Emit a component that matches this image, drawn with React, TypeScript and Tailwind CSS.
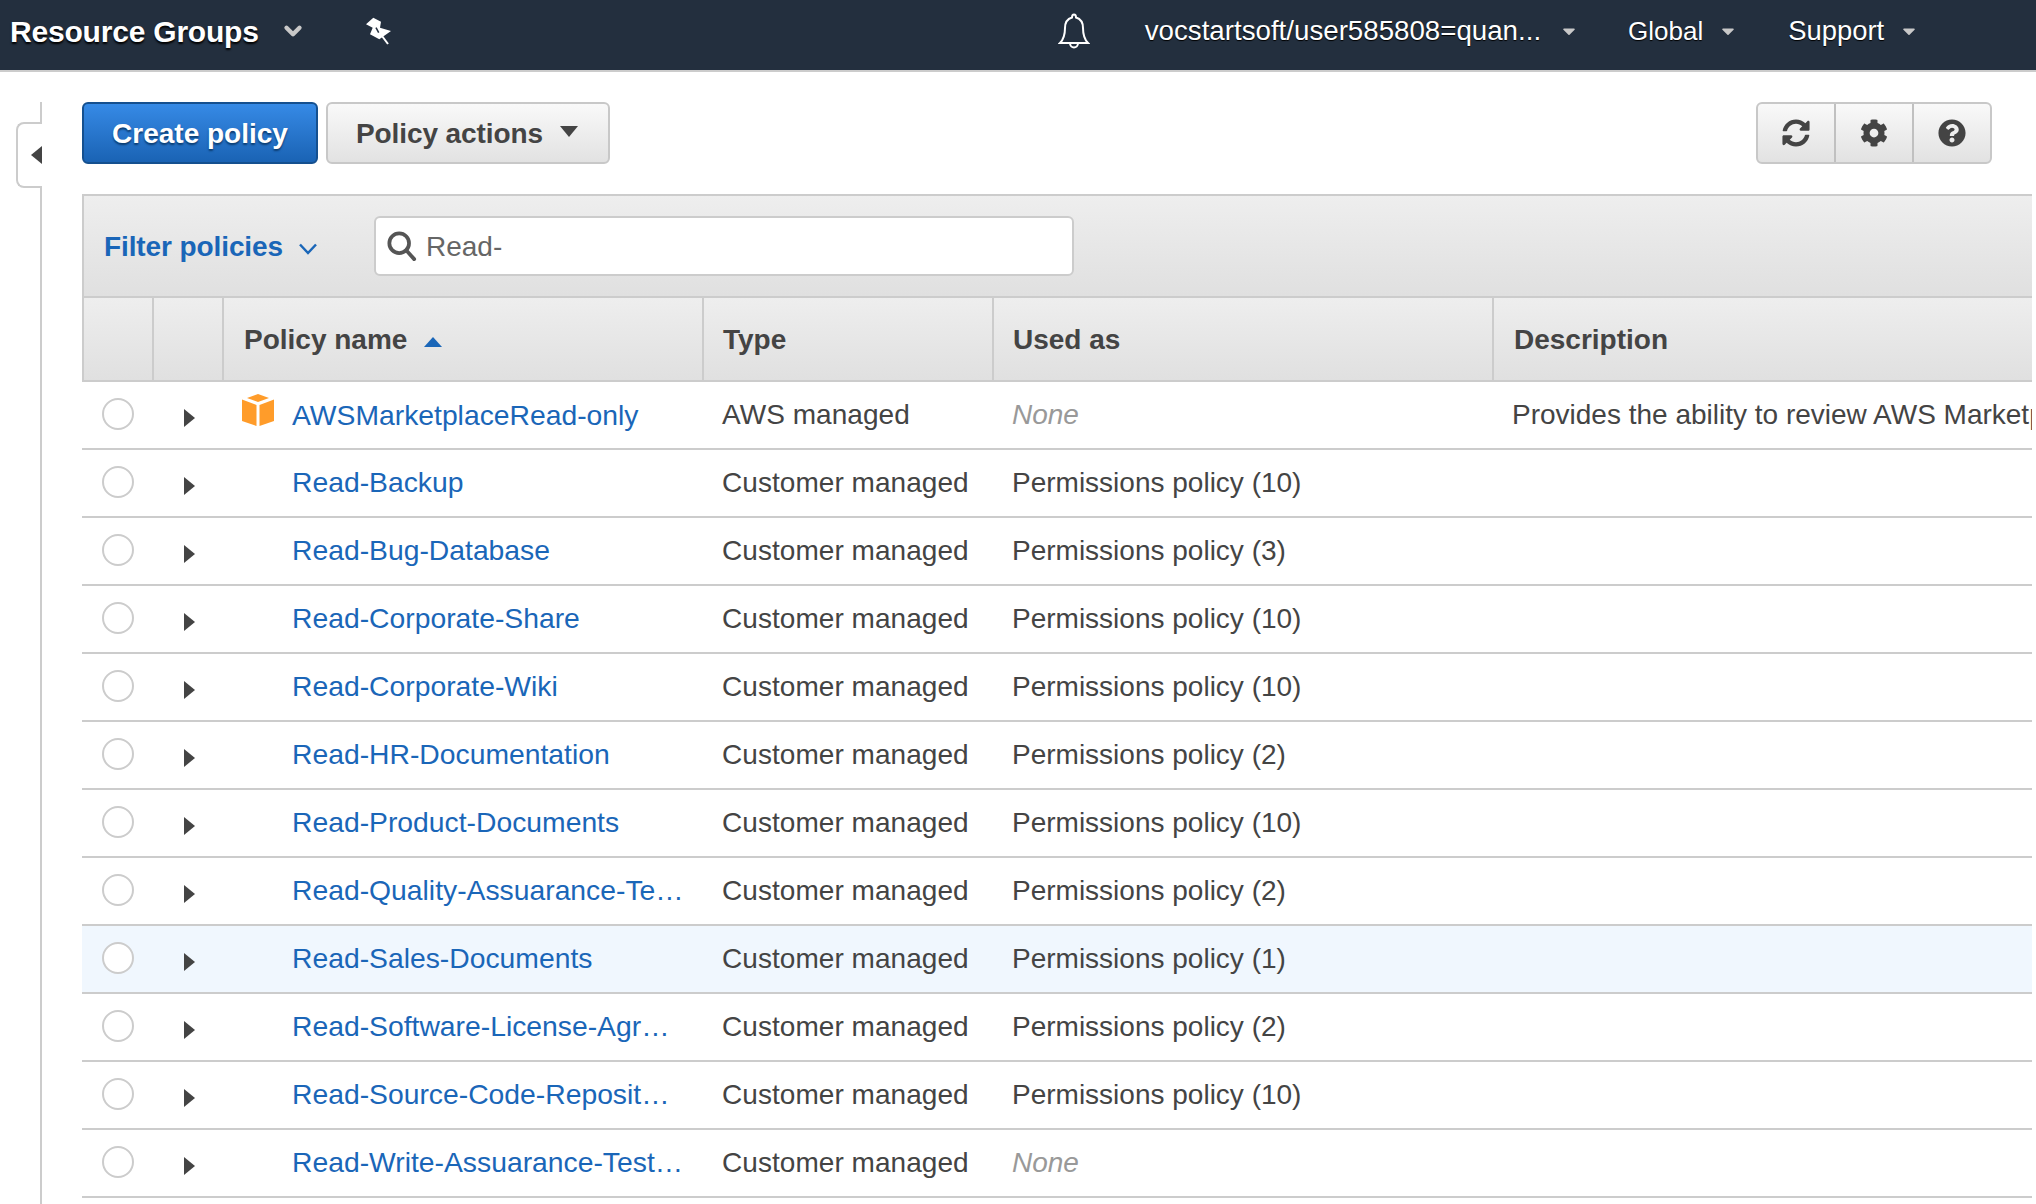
import { FaSyncAlt, FaCog, FaQuestionCircle, FaCaretDown } from "react-icons/fa";
import { FiChevronDown } from "react-icons/fi";

const rows = [
  { name: "AWSMarketplaceRead-only", type: "AWS managed", used: "None", desc: "Provides the ability to review AWS Marketplace subscriptions", aws: true },
  { name: "Read-Backup", type: "Customer managed", used: "Permissions policy (10)" },
  { name: "Read-Bug-Database", type: "Customer managed", used: "Permissions policy (3)" },
  { name: "Read-Corporate-Share", type: "Customer managed", used: "Permissions policy (10)" },
  { name: "Read-Corporate-Wiki", type: "Customer managed", used: "Permissions policy (10)" },
  { name: "Read-HR-Documentation", type: "Customer managed", used: "Permissions policy (2)" },
  { name: "Read-Product-Documents", type: "Customer managed", used: "Permissions policy (10)" },
  { name: "Read-Quality-Assuarance-Team-Documents", type: "Customer managed", used: "Permissions policy (2)" },
  { name: "Read-Sales-Documents", type: "Customer managed", used: "Permissions policy (1)", hover: true },
  { name: "Read-Software-License-Agreements", type: "Customer managed", used: "Permissions policy (2)" },
  { name: "Read-Source-Code-Repositories", type: "Customer managed", used: "Permissions policy (10)" },
  { name: "Read-Write-Assuarance-Test-Documents", type: "Customer managed", used: "None" },
];

function Cube() {
  return (
    <svg width="32" height="32" viewBox="0 0 32 32" className="shrink-0">
      <path d="M16 0 L27 4 L16 8 L5 4 Z" fill="#ff9c2a" />
      <path d="M0 5.5 L14.5 11 L14.5 32 L0 27 Z" fill="#ff9c2a" />
      <path d="M32 5.5 L17.5 11 L17.5 32 L32 27 Z" fill="#ff9c2a" />
    </svg>
  );
}

function HeaderCell({ label, className, sorted }: { label: string; className: string; sorted?: boolean }) {
  return (
    <div className={`flex items-center border-r-2 border-[#cccccc] pt-[2px] ${className}`}>
      <span className="text-[28px] font-bold text-[#444444]">{label}</span>
      {sorted && (
        <svg width="18" height="10" viewBox="0 0 18 10" className="mt-[4px] ml-[17px]">
          <path d="M9 0 L18 10 L0 10 Z" fill="#1a66b8" />
        </svg>
      )}
    </div>
  );
}

export default function App() {
  return (
    <div className="h-[1204px] overflow-hidden bg-white font-['Liberation_Sans',Arial,sans-serif]">
      <nav className="flex h-[72px] items-center border-b-2 border-[#cccccc] bg-[#232f3e] pb-[8px] pl-[10px]">
        <span className="text-[30px] font-bold tracking-[-0.2px] text-white [text-shadow:0_2px_2px_#000]">Resource Groups</span>
        <FiChevronDown className="ml-[21px] text-[26px] text-[#c8c8c8]" strokeWidth={4} />
        <svg width="25" height="28" viewBox="0 0 25 28" className="ml-[60px]">
          <path d="M7.3 0.7 L15 4.7 L14 10.7 L25 14 L13.3 22.3 L4 17.3 L6.7 10.7 L0 7.3 Z" fill="white" />
          <path d="M16 19 L22 27" stroke="white" strokeWidth="2" />
          <path d="M10 10.7 L12.7 15.7" stroke="#232f3e" strokeWidth="1.5" />
        </svg>
        <svg width="32" height="36" viewBox="0 0 32 36" className="ml-[667px]" fill="none" stroke="white" strokeWidth="2">
          <path d="M16 1.5 C17.5 1.5 18 3 18 4.5 C23 6 25 10 25 15 C25 22 26 26 30 30 L2 30 C6 26 7 22 7 15 C7 10 9 6 14 4.5 C14 3 14.5 1.5 16 1.5 Z" />
          <path d="M12 30 C12 36 20 36 20 30" />
        </svg>
        <span className="ml-[55px] text-[27.7px] text-white [text-shadow:0_1px_1px_#000]">vocstartsoft/user585808=quan...</span>
        <FaCaretDown className="ml-[18px] text-[20px] text-[#c8c8c8]" />
        <span className="ml-[49px] text-[26px] text-white [text-shadow:0_1px_1px_#000]">Global</span>
        <FaCaretDown className="ml-[15px] text-[20px] text-[#c8c8c8]" />
        <span className="ml-[50px] text-[27.4px] text-white [text-shadow:0_1px_1px_#000]">Support</span>
        <FaCaretDown className="ml-[15px] text-[20px] text-[#c8c8c8]" />
      </nav>

      <div className="flex">
        <div className="w-[82px] shrink-0 pt-[30px]">
          <div className="h-[1102px] w-[42px] border-r-2 border-[#cccccc]">
            <div className="relative top-[20px] flex h-[66px] w-[26px] translate-x-[16px] items-center justify-end rounded-l-[8px] border-2 border-r-0 border-[#cccccc] bg-white">
              <svg width="11" height="18" viewBox="0 0 11 18">
                <path d="M11 0 L11 18 L0 9 Z" fill="#444444" />
              </svg>
            </div>
          </div>
        </div>

        <main className="w-[1950px] shrink-0 pt-[30px]">
          <div className="mr-[40px] flex h-[62px] items-stretch">
            <button className="flex w-[236px] items-center justify-center rounded-[6px] border-2 border-[#15508f] bg-gradient-to-b from-[#368ae6] to-[#1a63b4] pt-[2px] text-[28px] font-bold text-white [text-shadow:0_2px_2px_#0b3c70]">
              Create policy
            </button>
            <button className="ml-[8px] flex w-[284px] items-center rounded-[6px] border-2 border-[#c8c8c8] bg-gradient-to-b from-[#f9f9f9] to-[#e2e2e2] pl-[28px] text-[28px] font-bold text-[#444444]">
              <span className="pt-[2px] tracking-[-0.1px]">Policy actions</span>
              <svg width="18" height="11" viewBox="0 0 18 11" className="mb-[4px] ml-[17px]">
                <path d="M0 0 L18 0 L9 11 Z" fill="#444444" />
              </svg>
            </button>
            <div className="ml-auto flex w-[236px] rounded-[6px] border-2 border-[#c8c8c8] bg-gradient-to-b from-[#f9f9f9] to-[#e2e2e2] text-[28px] text-[#444444]">
              <div className="flex flex-1 items-center justify-center border-r-2 border-[#c0c0c0]"><FaSyncAlt /></div>
              <div className="flex flex-1 items-center justify-center border-r-2 border-[#c0c0c0]"><FaCog /></div>
              <div className="flex flex-1 items-center justify-center"><FaQuestionCircle /></div>
            </div>
          </div>

          <div className="mt-[30px] w-[1950px]">
            <div className="flex h-[104px] items-center border-y-2 border-l-2 border-[#cccccc] bg-gradient-to-b from-[#eeeeee] to-[#e0e0e0] pl-[20px]">
              <span className="pt-[2px] text-[28px] font-bold tracking-[-0.1px] text-[#1a66b8]">Filter policies</span>
              <svg width="18" height="12" viewBox="0 0 18 12" className="mt-[6px] ml-[16px]" fill="none" stroke="#1a66b8" strokeWidth="2.5">
                <path d="M1 1.5 L9 10 L17 1.5" />
              </svg>
              <div className="ml-[57px] flex h-[60px] w-[700px] items-center rounded-[6px] border-2 border-[#cccccc] bg-white pl-[11px] text-[28px] text-[#666666]">
                <svg width="30" height="30" viewBox="0 0 32 32" fill="none" stroke="#555555" strokeWidth="4">
                  <circle cx="13" cy="13" r="10.5" />
                  <path d="M20.5 20.5 L29 30" strokeLinecap="round" />
                </svg>
                <span className="ml-[9px] pt-[2px]">Read-</span>
              </div>
            </div>

            <div className="flex h-[84px] border-b-2 border-l-2 border-[#cccccc] bg-gradient-to-b from-[#eeeeee] to-[#e0e0e0]">
              <div className="w-[70px] border-r-2 border-[#cccccc]" />
              <div className="w-[70px] border-r-2 border-[#cccccc]" />
              <HeaderCell label="Policy name" sorted className="w-[480px] pl-[20px]" />
              <HeaderCell label="Type" className="w-[290px] pl-[19px]" />
              <HeaderCell label="Used as" className="w-[500px] pl-[19px]" />
              <div className="flex flex-1 items-center pt-[2px] pl-[20px] text-[28px] font-bold text-[#444444]">Description</div>
            </div>

            {rows.map((row) => (
              <div key={row.name} className={`flex h-[68px] items-center border-b-2 border-[#cccccc] text-[28px] text-[#444444] ${row.hover ? "bg-[#f0f7fe]" : "bg-white"}`}>
                <div className="flex w-[71px] shrink-0 justify-center">
                  <div className="mb-[2px] ml-[1px] h-[32px] w-[32px] rounded-full border-2 border-[#cccccc] bg-white" />
                </div>
                <div className="flex w-[71px] shrink-0 justify-center pt-[6px]">
                  <svg width="11" height="18" viewBox="0 0 11 18" className="ml-[2px]">
                    <path d="M0 0 L11 9 L0 18 Z" fill="#444444" />
                  </svg>
                </div>
                <div className="flex w-[480px] shrink-0 items-center pr-[19px]">
                  <div className="ml-[18px] flex w-[34px] shrink-0">{row.aws && <div className="mb-[10px]"><Cube /></div>}</div>
                  <a className={`ml-[16px] truncate text-[28.3px] text-[#1a66b8] ${row.aws ? "mt-[1px]" : "mb-[2px]"}`}>{row.name}</a>
                </div>
                <div className="w-[290px] shrink-0 pl-[18px] tracking-[0.05px]">{row.type}</div>
                <div className={`w-[500px] shrink-0 pl-[18px] ${row.used === "None" ? "italic text-[#999999]" : ""}`}>{row.used}</div>
                <div className="min-w-0 flex-1 overflow-hidden pl-[18px] whitespace-nowrap">{row.desc}</div>
              </div>
            ))}
          </div>
        </main>
      </div>
    </div>
  );
}
